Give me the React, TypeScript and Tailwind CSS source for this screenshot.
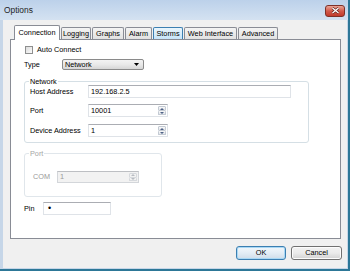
import React from 'react'

const tabs = [
  { name: 'Connection', w: 'w-[46px]', state: 'selected' },
  { name: 'Logging', w: 'w-[30px]', state: 'normal' },
  { name: 'Graphs', w: 'w-[32px]', state: 'normal' },
  { name: 'Alarm', w: 'w-[27px]', state: 'normal' },
  { name: 'Storms', w: 'w-[30px]', state: 'hover' },
  { name: 'Web Interface', w: 'w-[53px]', state: 'normal' },
  { name: 'Advanced', w: 'w-[40px]', state: 'normal' },
]

function Tab({ name, w, state }: { name: string; w: string; state: string }) {
  if (state === 'selected') {
    return (
      <div className={`${w} h-[15px] border border-b-0 border-[#898c95] bg-white rounded-t-[2px] flex items-center justify-center`}>
        {name}
      </div>
    )
  }
  const look =
    state === 'hover'
      ? 'border-[#3c7fb1] bg-gradient-to-b from-[#eaf6fd] to-[#c6e4f8]'
      : 'border-[#898c95] bg-gradient-to-b from-[#f4f4f4] to-[#e1e1e1]'
  return (
    <div className={`${w} h-[12px] mb-[1px] ml-[1px] border border-b-0 rounded-t-[2px] flex items-center justify-center ${look}`}>
      {name}
    </div>
  )
}

function SpinButtons({ disabled = false }: { disabled?: boolean }) {
  const box = disabled
    ? 'border-[#d6d9dd] bg-[#f2f2f2]'
    : 'border-[#c3cad3] bg-gradient-to-b from-[#f8f8f8] to-[#e3e6ea]'
  const fill = disabled ? '#b8bcc2' : '#4d6185'
  return (
    <div className="w-[8px] h-full flex flex-col mr-[1px] py-[1px]">
      <div className={`flex-1 border rounded-[1px] flex items-center justify-center ${box}`}>
        <svg width="4" height="2" viewBox="0 0 4 2">
          <path d="M0 2 L2 0 L4 2 Z" fill={fill} />
        </svg>
      </div>
      <div className={`flex-1 border border-t-0 rounded-[1px] flex items-center justify-center ${box}`}>
        <svg width="4" height="2" viewBox="0 0 4 2">
          <path d="M0 0 L4 0 L2 2 Z" fill={fill} />
        </svg>
      </div>
    </div>
  )
}

function Field({
  w,
  h = 'h-[13px]',
  value,
  spin = false,
  disabled = false,
}: {
  w: string
  h?: string
  value: React.ReactNode
  spin?: boolean
  disabled?: boolean
}) {
  const look = disabled
    ? 'bg-[#f2f2f2] border-[#d3d6da] border-t-[#bdbfc3] text-[#9a9a9a]'
    : 'bg-white border-[#dfe3e8] border-t-[#abadb3]'
  return (
    <div className={`${w} ${h} border flex items-center ${look}`}>
      <span className="flex-1 pl-[2px]">{value}</span>
      {spin && <SpinButtons disabled={disabled} />}
    </div>
  )
}

export default function App() {
  return (
    <div className="w-[350px] h-[271px] flex flex-col bg-[#c6d6e8] border-r-2 border-[#2d7797] font-['Liberation_Sans',Arial,sans-serif] text-[7.3px] leading-none text-black overflow-hidden">
      {/* title bar */}
      <div className="h-[20px] flex items-center justify-between pl-[4px] pr-[3px] bg-gradient-to-b from-[#bcd1ea] to-[#d4e2f1]">
        <span className="text-[8.4px] text-[#1e1e1e]">Options</span>
        <div className="w-[20px] h-[12px] mt-[1px] rounded-[3px] border border-[#7e3128] bg-gradient-to-b from-[#e9a597] via-[#d25a4b] to-[#c13a2b] flex items-center justify-center">
          <svg width="9" height="7" viewBox="0 0 9 7">
            <path d="M1.5 1 L7.5 6 M7.5 1 L1.5 6" stroke="#5b1c15" strokeWidth="2.6" />
            <path d="M1.5 1 L7.5 6 M7.5 1 L1.5 6" stroke="#ffffff" strokeWidth="1.4" />
          </svg>
        </div>
      </div>

      {/* client area */}
      <div className="flex-1 ml-[3px] mr-[1px] bg-[#f0f0f0] flex flex-col pl-[7px] pt-[5px]">
        <div className="flex items-end ml-[4px] -mb-[1px] relative z-10">
          {tabs.map((t) => (
            <Tab key={t.name} {...t} />
          ))}
        </div>

        <div className="w-[331px] h-[200px] border border-[#898c95] bg-white flex flex-col">
          {/* Auto Connect */}
          <div className="mt-[6px] ml-[14px] h-[8px] flex items-center">
            <div className="w-[8px] h-[8px] border border-[#8e8f8f] bg-gradient-to-br from-[#dcdcdc] to-[#fbfbfb]" />
            <span className="ml-[4px]">Auto Connect</span>
          </div>

          {/* Type */}
          <div className="mt-[5px] ml-[13px] h-[11px] flex items-center">
            <span className="w-[38px]">Type</span>
            <div className="w-[82px] h-[11px] rounded-[2px] border border-[#8a8a8a] bg-gradient-to-b from-[#f3f3f3] via-[#e9e9e9] to-[#d6d6d6] flex items-center justify-between pl-[2px] pr-[4px]">
              <span>Network</span>
              <svg width="5" height="3" viewBox="0 0 5 3">
                <path d="M0 0 L5 0 L2.5 3 Z" fill="#000" />
              </svg>
            </div>
          </div>

          {/* Network group */}
          <div className="mt-[11px] ml-[13px] w-[285px] border border-[#d5dfe5] rounded-[3px] flex flex-col pb-[5px]">
            <span className="-mt-[4px] ml-[4px] px-[1px] leading-[7px] bg-white w-fit">Network</span>
            <div className="h-[13px] pl-[5px] flex items-center">
              <span className="w-[58px]">Host Address</span>
              <Field w="w-[203px]" value="192.168.2.5" />
            </div>
            <div className="mt-[6px] h-[13px] pl-[5px] flex items-center">
              <span className="w-[58px]">Port</span>
              <Field w="w-[80px]" value="10001" spin />
            </div>
            <div className="mt-[7px] h-[13px] pl-[5px] flex items-center">
              <span className="w-[58px]">Device Address</span>
              <Field w="w-[80px]" value="1" spin />
            </div>
          </div>

          {/* Port group (disabled) */}
          <div className="mt-[10px] ml-[13px] w-[138px] border border-[#e0e6eb] rounded-[3px] flex flex-col pb-[13px]">
            <span className="-mt-[4px] ml-[4px] px-[1px] leading-[7px] bg-white w-fit text-[#a6a6a6]">Port</span>
            <div className="mt-[14px] h-[12px] pl-[8px] flex items-center">
              <span className="w-[24px] text-[#9a9a9a]">COM</span>
              <Field w="w-[82px]" h="h-[12px]" value="1" spin disabled />
            </div>
          </div>

          {/* Pin */}
          <div className="mt-[5px] ml-[13px] h-[13px] flex items-center">
            <span className="w-[19px]">Pin</span>
            <Field w="w-[68px]" value={<span className="text-[9px] pl-[2px]">•</span>} />
          </div>
        </div>

        {/* buttons */}
        <div className="flex justify-end gap-[5px] mt-[7px] pr-[5px]">
          <div className="w-[50px] h-[14px] rounded-[3px] border border-[#3c7fb1] bg-gradient-to-b from-[#f2f7fb] via-[#e3edf5] to-[#cfdde9] shadow-[inset_0_0_0_1px_#a9d8f5] flex items-center justify-center">
            OK
          </div>
          <div className="w-[51px] h-[14px] rounded-[3px] border border-[#707070] bg-gradient-to-b from-[#f2f2f2] via-[#ebebeb] to-[#d2d2d2] shadow-[inset_0_0_0_1px_#fcfcfc] flex items-center justify-center">
            Cancel
          </div>
        </div>
      </div>
      <div className="h-[3px] border-b-2 border-[#2d7797]" />
    </div>
  )
}
